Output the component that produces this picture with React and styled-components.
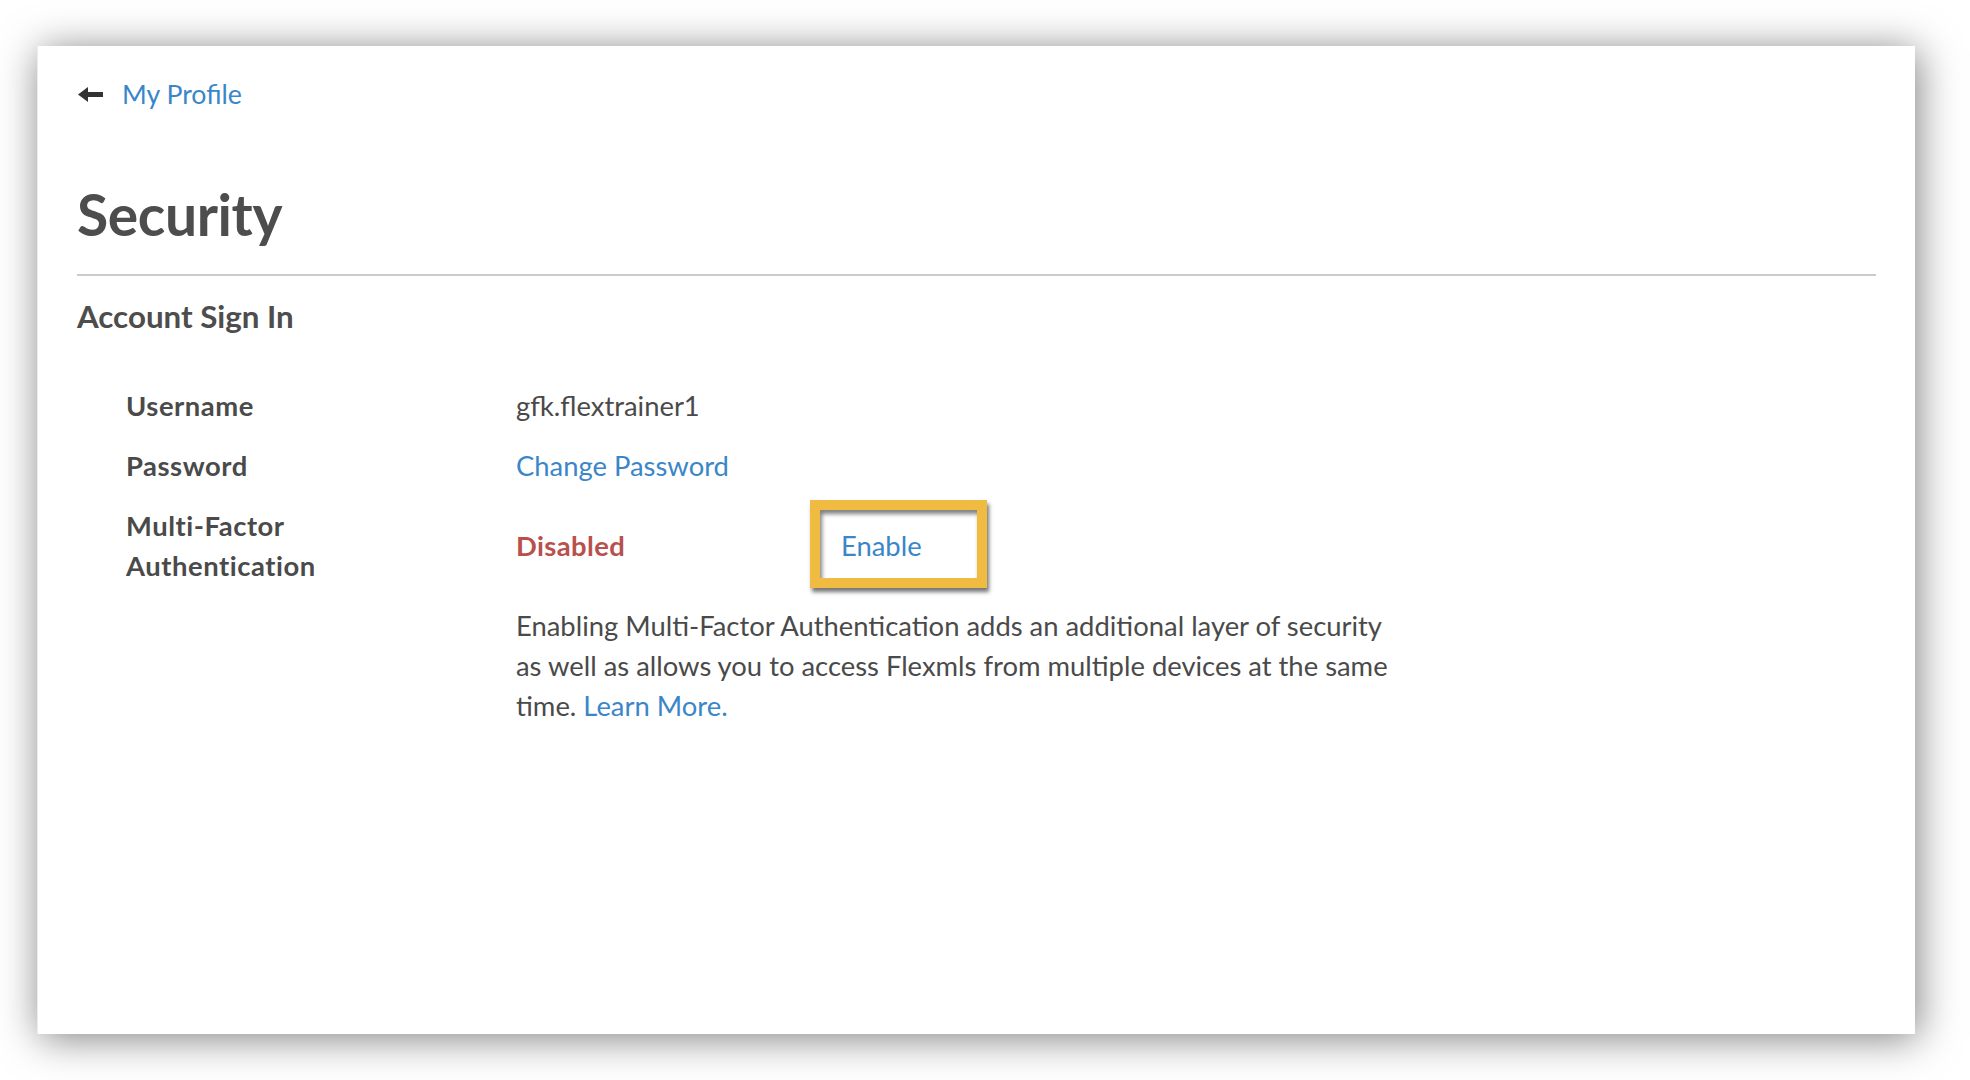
import React from "react";
import styled, { createGlobalStyle } from "styled-components";

const Global = createGlobalStyle`
  html, body { margin: 0; padding: 0; background: #ffffff; }
  body { font-family: Lato, "Open Sans", sans-serif; color: #4a4a4a; }
`;

const Page = styled.div`
  width: 1970px;
  height: 1080px;
  box-sizing: border-box;
  padding: 46px 55px 46px 37px;
  background: #ffffff;
`;

const Card = styled.main`
  height: 988px;
  box-sizing: border-box;
  background: #ffffff;
  border-left: 1px solid #ececec;
  box-shadow: 3px 4px 38px rgba(0, 0, 0, 0.5);
  padding: 28px 39px 0 39px;
`;

const BackRow = styled.a`
  display: flex;
  align-items: center;
  gap: 19px;
  height: 40px;
  padding-left: 1px;
  text-decoration: none;
  color: #3a86c8;
  font-size: 26.7px;
  line-height: 40px;
`;

const Heading = styled.h1`
  margin: 65px 0 0 0;
  font-size: 57px;
  line-height: 70px;
  font-weight: 700;
  color: #4d4d4d;
  letter-spacing: -0.4px;
`;

const Rule = styled.hr`
  margin: 25px 0 0 0;
  border: 0;
  height: 2px;
  background: #cbcbcb;
`;

const SectionTitle = styled.h2`
  margin: 20px 0 0 0;
  font-size: 31.3px;
  line-height: 40px;
  font-weight: 700;
  color: #4d4d4d;
`;

const Grid = styled.div`
  display: grid;
  grid-template-columns: 390px 1fr;
  row-gap: 20px;
  margin-top: 50px;
  padding-left: 49px;
  font-size: 27.4px;
  line-height: 40px;
`;

const Label = styled.div`
  font-weight: 700;
  letter-spacing: 0.55px;
  color: #4a4a4a;
`;

const Value = styled.div`
  display: flex;
  align-items: center;
  color: #4a4a4a;
`;

const Link = styled.a`
  color: #3a86c8;
  text-decoration: none;
`;

const Status = styled.span`
  width: 294px;
  font-weight: 700;
  letter-spacing: 0.4px;
  color: #b8504b;
`;

const Highlight = styled.span`
  display: inline-flex;
  align-items: center;
  box-sizing: border-box;
  width: 177px;
  height: 88px;
  margin: -6px 0 -2px 0;
  border: 10px solid #efbb40;
  padding: 4px 0 0 21px;
  box-shadow: 2px 4px 4px rgba(0, 0, 0, 0.55), inset 2px 4px 4px rgba(0, 0, 0, 0.5);
`;

const Description = styled.p`
  grid-column: 2;
  margin: 0;
  color: #4a4a4a;
`;

function BackArrow() {
  return (
    <svg width="25" height="15" viewBox="0 0 25 15" aria-hidden="true">
      <path d="M0 7.5 L10 0 L10 5 L25 5 L25 10 L10 10 L10 15 Z" fill="#333333" />
    </svg>
  );
}

export default function App() {
  return (
    <>
      <Global />
      <Page>
        <Card>
          <BackRow href="#">
            <BackArrow />
            <span>My Profile</span>
          </BackRow>
          <Heading>Security</Heading>
          <Rule />
          <SectionTitle>Account Sign In</SectionTitle>
          <Grid>
            <Label>Username</Label>
            <Value>gfk.flextrainer1</Value>
            <Label>Password</Label>
            <Value>
              <Link href="#">Change Password</Link>
            </Value>
            <Label>
              Multi-Factor
              <br />
              Authentication
            </Label>
            <Value>
              <Status>Disabled</Status>
              <Highlight>
                <Link href="#">Enable</Link>
              </Highlight>
            </Value>
            <Description>
              Enabling Multi-Factor Authentication adds an additional layer of security
              <br />
              as well as allows you to access Flexmls from multiple devices at the same
              <br />
              time. <Link href="#">Learn More.</Link>
            </Description>
          </Grid>
        </Card>
      </Page>
    </>
  );
}
